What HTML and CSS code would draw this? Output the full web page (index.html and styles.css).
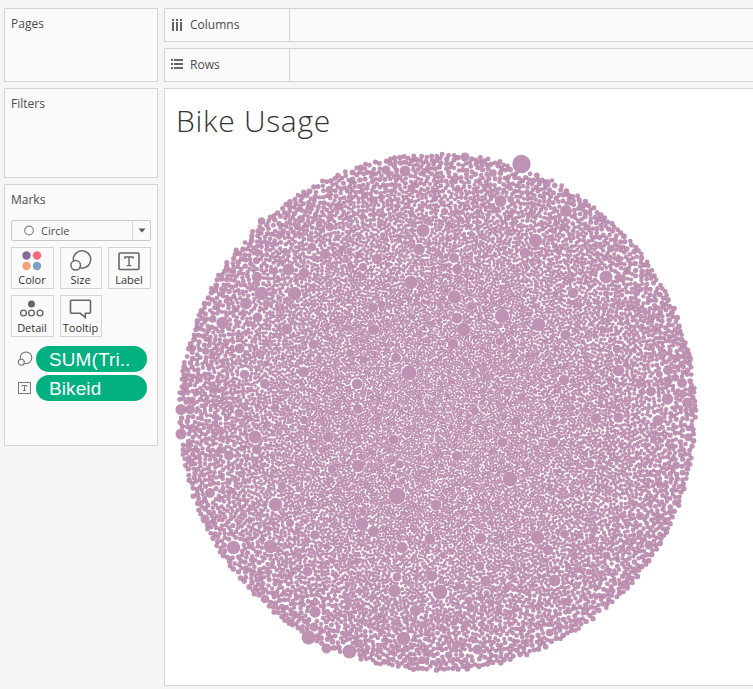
FILE: index.html
```html
<!DOCTYPE html>
<html lang="en">
<head>
<meta charset="utf-8">
<title>Bike Usage</title>
<link rel="stylesheet" href="styles.css">
</head>
<body>
<div class="workspace">
  <aside class="side">
    <section class="card pages"><h2>Pages</h2></section>
    <section class="card filters"><h2>Filters</h2></section>
    <section class="card marks">
      <h2>Marks</h2>
      <div class="select">
        <svg class="ring" width="12" height="12"><circle cx="6" cy="5.5" r="4.3" fill="none" stroke="#8c8c8c" stroke-width="1.2"/></svg>
        <span>Circle</span>
        <div class="arrow"><svg width="8" height="5"><path d="M.5 .5h7L4 4.5z" fill="#555"/></svg></div>
      </div>
      <div class="buttons">
        <div class="btn"><svg width="43" height="25"><circle cx="15.5" cy="7.5" r="4.2" fill="#866b96"/><circle cx="26" cy="7.5" r="4.2" fill="#fb6a7c"/><circle cx="15.5" cy="18" r="4.2" fill="#f3a477"/><circle cx="26" cy="18" r="4.2" fill="#7b9fca"/></svg><span>Color</span></div>
        <div class="btn"><svg width="42" height="25" fill="#fafafa" stroke="#666" stroke-width="1.5"><circle cx="22" cy="11.5" r="8.7"/><circle cx="15.7" cy="17.3" r="4.8"/></svg><span>Size</span></div>
        <div class="btn"><svg width="43" height="25"><rect x="11" y="5" width="20" height="16.5" rx="1" fill="none" stroke="#666" stroke-width="1.6"/><path d="M17 10.8V9h8v1.8M21 9v8.6M18.7 17.6h4.6" fill="none" stroke="#666" stroke-width="1.4"/></svg><span>Label</span></div>
        <div class="btn"><svg width="43" height="25" fill="none" stroke="#666" stroke-width="1.4"><circle cx="20.5" cy="8" r="3.5" fill="#666" stroke="none"/><circle cx="12.5" cy="17" r="2.9"/><circle cx="20.5" cy="17" r="2.9"/><circle cx="29" cy="17" r="2.9"/></svg><span>Detail</span></div>
        <div class="btn"><svg width="42" height="25"><path d="M11.5 4.3h18q1 0 1 1v11q0 1-1 1h-4.2V21.5l-5-4.2h-8.8q-1 0-1-1v-11q0-1 1-1z" fill="none" stroke="#666" stroke-width="1.6"/></svg><span>Tooltip</span></div>
      </div>
      <div class="field">
        <svg width="16" height="16" fill="#fafafa" stroke="#777" stroke-width="1.1"><circle cx="9" cy="6.8" r="5.8"/><circle cx="4.3" cy="11.3" r="3"/></svg>
        <div class="pill">SUM(Tri..</div>
      </div>
      <div class="field">
        <svg width="16" height="16" fill="none" stroke="#777"><rect x="1.5" y="2.5" width="12" height="11"/><path d="M5 6.5V5.5h5v1M7.5 5.5v5M6 10.5h3"/></svg>
        <div class="pill">Bikeid</div>
      </div>
    </section>
  </aside>
  <main class="main">
    <div class="shelf"><div class="name"><svg width="13" height="13" fill="#666"><path d="M1 0h2v2H1zM5 0h2v2H5zM9 0h2v2H9zM1 3h2v9H1zM5 3h2v9H5zM9 3h2v9H9z"/></svg>Columns</div></div>
    <div class="shelf"><div class="name"><svg width="13" height="13" fill="#666"><path d="M0 0h2v2H0zM0 4h2v2H0zM0 8h2v2H0zM3 0h9v2H3zM3 4h9v2H3zM3 8h9v2H3z"/></svg>Rows</div></div>
    <section class="view">
      <h1>Bike Usage</h1>
      <canvas id="chart" width="588" height="540"></canvas>
    </section>
  </main>
</div>
<script src="chart.js"></script>
</body>
</html>
```
FILE: styles.css
```css
* { box-sizing: border-box; }
body { margin: 0; background: #f5f5f5; color: #4b4b4b; font: 12px/16px "Open Sans", sans-serif; overflow: hidden; }
svg { display: block; flex: none; }
.workspace { display: flex; gap: 6px; width: 757px; height: 689px; padding: 8px 0 3px 4px; }
.side { width: 154px; flex: none; display: flex; flex-direction: column; gap: 6px; }
.card { background: #fafafa; border: 1px solid #d4d4d4; padding: 7px 6px; }
.card h2 { margin: 0; font-size: 12px; font-weight: 400; line-height: 16px; }
.pages { height: 74px; }
.filters { height: 90px; }
.marks { height: 262px; }
.select { display: flex; align-items: center; height: 21px; margin-top: 12px; border: 1px solid #c8c8c8; border-radius: 2px; font-size: 11px; }
.ring { margin: 0 6px 0 11px; }
.arrow { margin-left: auto; width: 18px; height: 19px; border-left: 1px solid #d4d4d4; display: grid; place-items: center; }
.buttons { display: grid; grid-template-columns: 43px 42px 43px; gap: 6px; margin-top: 6px; }
.btn { height: 42px; border: 1px solid #d4d4d4; font-size: 11px; line-height: 13px; color: #333; text-align: center; }
.btn svg { margin-left: -1px; }
.btn span { display: block; white-space: nowrap; margin: 0 -2px 0 -3px; }
.field { display: flex; align-items: center; gap: 3px; height: 26px; margin: 9px 0 0 6px; }
.field + .field { margin-top: 3px; }
.pill { width: 111px; height: 26px; border-radius: 13px; background: #00b180; color: #fff; font: 19px/27px "Liberation Sans", sans-serif; letter-spacing: .1px; padding-left: 13px; }
.main { flex: 1; display: flex; flex-direction: column; }
.shelf { height: 34px; margin-bottom: 6px; background: #fafafa; border: 1px solid #d4d4d4; }
.name { width: 125px; height: 32px; border-right: 1px solid #d4d4d4; padding-left: 6px; display: flex; align-items: center; gap: 6px; }
.view { height: 598px; background: #fff; border: 1px solid #d4d4d4; }
.view h1 { margin: 12px 0 0 11px; height: 41px; font-size: 30px; line-height: 40px; font-weight: 300; letter-spacing: .7px; color: #333; white-space: nowrap; }
#chart { display: block; }
```
FILE: chart.js
```js
// Packed bubble chart: large bubbles first, then the small ones packed between them.
const canvas = document.getElementById('chart');
const ctx = canvas.getContext('2d');
const OX = 165, OY = 142, CX = 437.5, CY = 412.5, R = 261;
const big = [
  [521.5,164,9.2],[423,230.5,6.6],[419,249.5,5.7],[411,282.5,6.7],[535.5,240.5,6.7],[525,253,5.3],[500.5,201,6],
  [566,211,6],[606,277,6.5],[573,293,5.3],[454.5,297,6.7],[457.5,269,5.3],[454,258,5],[457,318,5.5],[463.5,329.5,6.7],
  [502,316,7.2],[538.5,324.5,6.8],[453,344,5.3],[565.5,335,5.2],[618.5,370.5,5.8],[617,349,4.3],[564,380,5.3],
  [409,373,7.5],[396,358,5],[373.5,329.5,5.6],[373,307.5,5],[381.5,304.5,4],[377,259,5.3],[363,267,4.3],
  [330,227,4.3],[325,254,5.3],[312,247,4.3],[288.5,269.5,6],[304,273,5.3],[294.5,293.5,6.8],[261.5,293.5,6.8],
  [257,277,5.3],[246,303.5,6],[257.5,317.5,5],[222.5,323,6.2],[287,329,5.5],[313.5,344.5,5],[350,353,4.3],
  [303.5,372,5.6],[265,384,5],[244.5,374.5,4.8],[239.5,348.5,5],[357,384,5.3],[386,170,4.5],[405,171,5.5],
  [261.5,221,3.8],[301,219,4],[465,157,4.5],[181,409.5,5.5],[190,409.5,5],[181,434,5.5],[239,413,4.6],
  [255,437,6.5],[257,449.5,5],[229,455.5,5],[275,408,4.5],[304,420,4.2],[328,437,5.3],[358,409,5],[393.5,439.5,5],
  [358,466,6.2],[332,469,4.3],[399.5,464.5,4.3],[282,486,4.3],[397,496,8.5],[275.5,504.5,6.8],[310,503,4],
  [205,519,4.5],[210,493,5],[233.5,547.5,6.8],[270.5,546.5,6.8],[362,524,6.5],[373.5,531.5,5.7],[315,535,4.8],
  [402,547.5,5.8],[290,523,4.2],[307.5,571.5,5],[394.5,591,6.4],[397,577,4.5],[415.5,610.5,5.7],[315,612,5.7],
  [314,627,4.5],[308.5,637.5,6.9],[326.5,648.5,5],[349.5,651.5,7],[403.5,638.5,6.8],[265,599,4.3],[348,601,4],
  [457,456,5.3],[502.5,442.5,5],[553,442.5,5.3],[510,479,7.4],[590,464,4.5],[564.5,534,4.5],[596,418.5,5.4],[618.5,417.5,5.2],
  [475,411,4.2],[516,421,4.5],[554,422.5,4],[658,420.5,5.5],[651,391.5,5],[667.5,399,5.8],[682,383,5],[687.5,403,5.5],
  [436,505,5.5],[480.5,538.5,5.8],[537.5,537.5,6.8],[548,550,5.3],[479.5,566.5,5],[485.5,581,5.2],[554.5,580.5,6],
  [440,592,7.4],[432,576,5.5],[430,539,5.5],[574.5,556,4.2],[470.5,608,4.5],[477.5,649.5,5],[468.5,600.5,4],
  [640,516,4],[649,545,4.5],[606.5,555.5,4],[521.5,397,4],[507.5,392.5,4.2],[668,370,5],[444.5,211.5,3.6],[622,278.5,4],
  [471,306,4],[499.5,341.5,4],[556,348.5,3.5],[364,359.5,4]
];

let seed = 7;
function random() {
  seed ^= seed << 13; seed ^= seed >>> 17; seed ^= seed << 5;
  return (seed >>> 0) / 4294967296;
}

const CELL = 5, cells = new Map(), bubbles = [];
const key = (x, y) => Math.floor(x / CELL) * 1000 + Math.floor(y / CELL);
function add(x, y, r) {
  const b = { x, y, r };
  bubbles.push(b);
  const reach = r > 3.4 ? r : 0;
  const x0 = Math.floor((x - reach) / CELL), x1 = Math.floor((x + reach) / CELL);
  const y0 = Math.floor((y - reach) / CELL), y1 = Math.floor((y + reach) / CELL);
  for (let i = x0; i <= x1; i++) for (let j = y0; j <= y1; j++) {
    const k = i * 1000 + j;
    if (!cells.has(k)) cells.set(k, []);
    cells.get(k).push(b);
  }
  return b;
}
const gap = (b, r) => b.r > 3.4 ? b.r + r * 0.8 : (b.r + r) * 0.825;
function fits(x, y, r) {
  const k = key(x, y);
  for (let i = -1; i <= 1; i++) for (let j = -1; j <= 1; j++) {
    const list = cells.get(k + i * 1000 + j);
    if (!list) continue;
    for (const b of list) {
      const d = gap(b, r);
      if ((x - b.x) ** 2 + (y - b.y) ** 2 < d * d - 0.001) return false;
    }
  }
  return true;
}
function size(x, y) {
  const q = Math.hypot(x - CX, y - CY) / R;
  const spread = random();
  return (1.25 + 1.5 * Math.pow(q, 2.6)) * (0.86 + 0.26 * spread + (spread > 0.97 ? 0.4 : 0));
}

for (const [x, y, r] of big) add(x, y, r);

// Scattered starting points keep the packing irregular.
for (let n = 0; n < 7000; n++) {
  const a = random() * Math.PI * 2, d = Math.sqrt(random()) * (R - 4);
  const x = CX + Math.cos(a) * d, y = CY + Math.sin(a) * d;
  const r = size(x, y);
  if (fits(x, y, r)) add(x, y, r);
}
const queue = bubbles.slice();
while (queue.length) {
  const pick = Math.floor(random() * queue.length);
  const b = queue[pick];
  queue[pick] = queue[queue.length - 1];
  queue.pop();
  for (let t = 0; t < 28; t++) {
    const a = random() * Math.PI * 2;
    const r = size(b.x, b.y);
    const d = gap(b, r) + random() * 0.15;
    const x = b.x + Math.cos(a) * d, y = b.y + Math.sin(a) * d;
    if (Math.hypot(x - CX, y - CY) + r > R + random() * 1.5 - 1) continue;
    if (fits(x, y, r)) queue.push(add(x, y, r));
  }
}

ctx.fillStyle = 'rgba(176, 122, 161, 0.82)';
for (const b of bubbles) {
  ctx.beginPath();
  ctx.arc(b.x - OX, b.y - OY, b.r, 0, Math.PI * 2);
  ctx.fill();
}
```
